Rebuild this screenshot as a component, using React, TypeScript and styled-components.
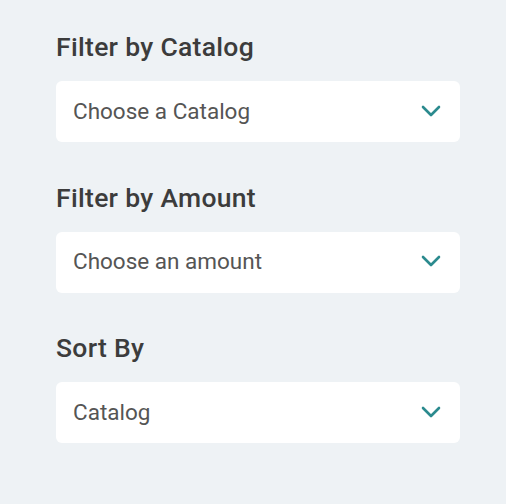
import React from 'react';
import styled, { createGlobalStyle } from 'styled-components';

const GlobalStyle = createGlobalStyle`
  html, body {
    margin: 0;
    padding: 0;
    background: #eef2f5;
    font-family: Roboto, "Liberation Sans", sans-serif;
  }
`;

const filters = [
  { label: 'Filter by Catalog', value: 'Choose a Catalog' },
  { label: 'Filter by Amount', value: 'Choose an amount' },
  { label: 'Sort By', value: 'Catalog' },
];

function Chevron() {
  return (
    <svg width="20" height="12" viewBox="0 0 20 12" fill="none">
      <path d="M2 2 L10 10 L18 2" stroke="#2b8a8e" strokeWidth="2.6" strokeLinecap="round" strokeLinejoin="round" />
    </svg>
  );
}

function App() {
  return (
    <Panel>
      <GlobalStyle />
      {filters.map((f) => (
        <Group key={f.label}>
          <Label>{f.label}</Label>
          <Select>
            <Value>{f.value}</Value>
            <Chevron />
          </Select>
        </Group>
      ))}
    </Panel>
  );
}

const Panel = styled.div`
  width: 506px;
  height: 504px;
  box-sizing: border-box;
  padding: 32px 46px 0 56px;
  display: flex;
  flex-direction: column;
  gap: 40.5px;
`;

const Group = styled.div`
  display: flex;
  flex-direction: column;
  gap: 19px;
`;

const Label = styled.div`
  font-size: 26.5px;
  font-weight: 500;
  line-height: 30px;
  color: #3c3c3c;
  letter-spacing: 0.3px;
`;

const Select = styled.div`
  box-sizing: border-box;
  height: 61px;
  background: #fff;
  border-radius: 6px;
  display: flex;
  align-items: center;
  justify-content: space-between;
  padding: 0 19px 2px 17px;
`;

const Value = styled.span`
  font-size: 22.5px;
  color: #555;
`;

export default App;
